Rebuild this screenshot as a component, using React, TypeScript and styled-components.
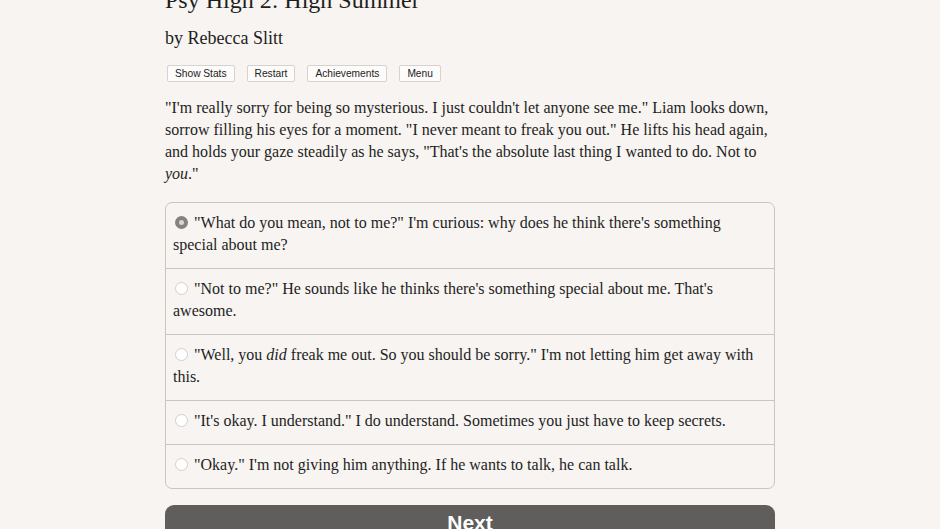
import styled, { createGlobalStyle } from "styled-components";

const GlobalStyle = createGlobalStyle`
  html, body {
    margin: 0;
    padding: 0;
    background: #f7f4f1;
    overflow: hidden;
  }
`;

const Page = styled.div`
  width: 610px;
  margin: -15px auto 0;
  font-family: "Liberation Serif", "Times New Roman", serif;
  color: #1e1e1e;
`;

const Title = styled.h1`
  font-size: 24px;
  font-weight: normal;
  line-height: 30px;
  margin: 0;
`;

const Author = styled.h2`
  font-size: 18px;
  font-weight: normal;
  line-height: 24px;
  margin: 11px 0 0;
`;

const Toolbar = styled.div`
  display: flex;
  gap: 12px;
  margin: 15px 0 0 2px;
`;

const ToolButton = styled.button`
  font-family: "Liberation Sans", Arial, sans-serif;
  font-size: 10.2px;
  line-height: 13px;
  color: #222;
  background: #fdfcfb;
  border: 1px solid #d6d3cf;
  border-radius: 2px;
  padding: 1px 7px 1px;
`;

const Passage = styled.p`
  font-size: 16px;
  line-height: 22px;
  margin: 15px 0 0;
`;

const ChoiceList = styled.div`
  margin-top: 17px;
  border: 1px solid #c9c6c2;
  border-radius: 7px;
  overflow: hidden;
`;

const Choice = styled.label`
  display: block;
  font-size: 16px;
  line-height: 22px;
  padding: 9px 7px 12px;
  & + & {
    border-top: 1px solid #c9c6c2;
  }
`;

const Radio = styled.span<{ $checked?: boolean }>`
  display: inline-block;
  width: 13px;
  height: 13px;
  border-radius: 50%;
  margin: 0 6px 0 2px;
  vertical-align: -1px;
  box-sizing: border-box;
  background: ${(p) => (p.$checked ? "#d9d7d5" : "#ffffff")};
  border: ${(p) => (p.$checked ? "4px solid #858381" : "1px solid #d3cfcb")};
`;

const NextButton = styled.button`
  width: 100%;
  margin-top: 16px;
  height: 44px;
  border: none;
  border-radius: 9px;
  background: #5f5e5c;
  color: #fff;
  font-family: "Liberation Sans", Arial, sans-serif;
  font-weight: bold;
  font-size: 21px;
  line-height: 24px;
  padding: 6px 0 0;
  display: flex;
  justify-content: center;
  align-items: flex-start;
`;

const choices = [
  { checked: true, text: <>"What do you mean, not to me?" I'm curious: why does he think there's something special about me?</> },
  { text: <>"Not to me?" He sounds like he thinks there's something special about me. That's awesome.</> },
  { text: <>"Well, you <i>did</i> freak me out. So you should be sorry." I'm not letting him get away with this.</> },
  { text: <>"It's okay. I understand." I do understand. Sometimes you just have to keep secrets.</> },
  { text: <>"Okay." I'm not giving him anything. If he wants to talk, he can talk.</> },
];

export default function App() {
  return (
    <>
      <GlobalStyle />
      <Page>
        <Title>Psy High 2: High Summer</Title>
        <Author>by Rebecca Slitt</Author>
        <Toolbar>
          <ToolButton>Show Stats</ToolButton>
          <ToolButton>Restart</ToolButton>
          <ToolButton>Achievements</ToolButton>
          <ToolButton>Menu</ToolButton>
        </Toolbar>
        <Passage>
          "I'm really sorry for being so mysterious. I just couldn't let anyone see me." Liam looks down,
          sorrow filling his eyes for a moment. "I never meant to freak you out." He lifts his head again,
          and holds your gaze steadily as he says, "That's the absolute last thing I wanted to do. Not to{" "}
          <i>you</i>."
        </Passage>
        <ChoiceList>
          {choices.map((c, i) => (
            <Choice key={i}>
              <Radio $checked={c.checked} />
              {c.text}
            </Choice>
          ))}
        </ChoiceList>
        <NextButton>Next</NextButton>
      </Page>
    </>
  );
}
